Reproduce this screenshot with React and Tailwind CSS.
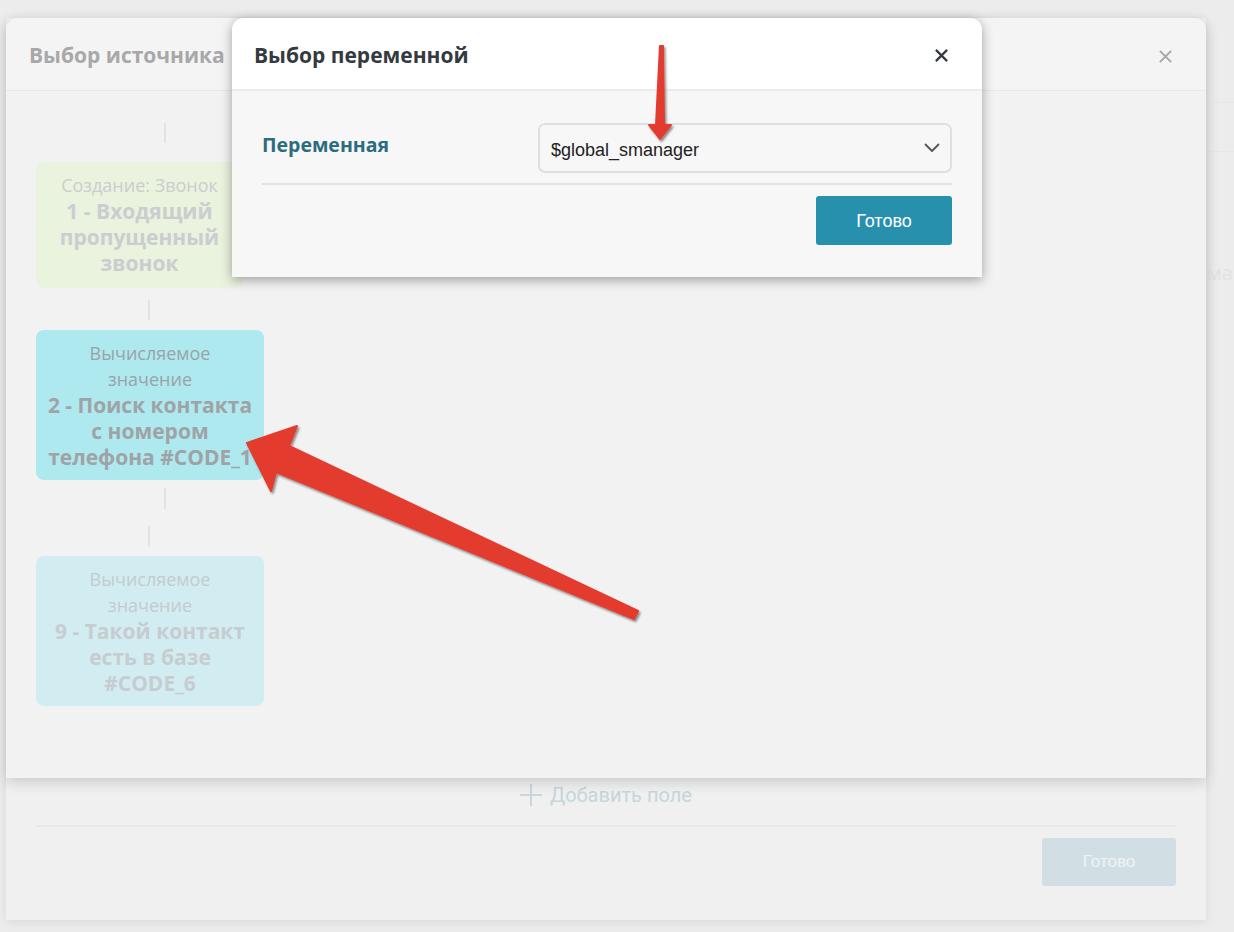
import React from "react";

function XIcon({ color, size = 15, sw = 2.4 }) {
  return (
    <svg width={size} height={size} viewBox="0 0 16 16" fill="none">
      <path d="M2 2 L14 14 M14 2 L2 14" stroke={color} strokeWidth={sw} strokeLinecap="butt" />
    </svg>
  );
}

function Chevron() {
  return (
    <svg width="16" height="10" viewBox="0 0 16 10" fill="none">
      <path d="M1.5 1.5 L8 8 L14.5 1.5" stroke="#555" strokeWidth="1.8" strokeLinecap="round" strokeLinejoin="round" />
    </svg>
  );
}

function Connector({ ml, mt, h }) {
  return <div className={`w-[2px] bg-[#e3e3e3] ${ml} ${mt} ${h}`} />;
}

export default function App() {
  const sans = { fontFamily: '"Open Sans", "Noto Sans", sans-serif' };
  const arial = { fontFamily: '"Liberation Sans", Arial, sans-serif' };
  return (
    <div className="relative w-[1234px] h-[932px] overflow-hidden bg-[#ececec] flex" style={sans}>
      {/* base page panel */}
      <div className="mt-[18px] ml-[6px] w-[1200px] h-[902px] shrink-0 bg-[#f0f0f0] shadow-[0_2px_10px_rgba(0,0,0,0.08)] flex flex-col justify-end px-[30px] pb-[34px]">
        <div className="flex items-center justify-center gap-[8px] h-[30px] mb-[15px]">
          <svg width="22" height="22" viewBox="0 0 22 22" fill="none">
            <path d="M11 0 V22 M0 11 H22" stroke="#c8d8dd" strokeWidth="2" />
          </svg>
          <span className="text-[20px] text-[#c6d6db]" style={{ fontFamily: 'Roboto, sans-serif' }}>Добавить поле</span>
        </div>
        <div className="h-[2px] bg-[#e9e9e9]" />
        <div className="flex justify-end mt-[11px]">
          <div className="w-[134px] h-[48px] rounded-[3px] bg-[#d1dfe4] flex items-center justify-center text-[17px] text-[#eef4f6]" style={arial}>
            Готово
          </div>
        </div>
      </div>
      {/* right strip of background page */}
      <div className="flex-1 flex flex-col pt-[102px] overflow-hidden">
        <div className="h-px bg-[#e6e6e6]" />
        <div className="h-px bg-[#e6e6e6] mt-[48px]" />
        <div className="mt-[106px] pl-[1px] text-[20px] text-[#e2e2e2] whitespace-nowrap" style={sans}>ма</div>
      </div>

      {/* Source modal */}
      <div className="absolute left-[6px] top-[18px] w-[1200px] h-[760px] rounded-t-[12px] bg-[#f2f2f2] shadow-[0_4px_14px_rgba(0,0,0,0.16)] flex flex-col">
        <div className="h-[73px] shrink-0 flex items-center justify-between pl-[23px] pr-[33px] pt-[4px] bg-[#f4f4f4] rounded-t-[12px] border-b border-[#e7e7e7]">
          <div className="text-[21px] font-bold text-[#a8a8a8]">Выбор источника</div>
          <XIcon color="#a3a6aa" size={15} sw={2} />
        </div>
        <div className="flex flex-col items-start pl-[30px]">
          <Connector ml="ml-[128px]" mt="mt-[32px]" h="h-[20px]" />
          <div className="mt-[19px] w-[207px] h-[126px] rounded-[8px] bg-[#e9f3dd] py-[10px] text-center leading-[26px] whitespace-nowrap">
            <div className="text-[18px] text-[#cbcdd1]">Создание: Звонок</div>
            <div className="text-[21px] font-bold text-[#cbcdd1] whitespace-pre-line">{"1 - Входящий\nпропущенный\nзвонок"}</div>
          </div>
          <Connector ml="ml-[112px]" mt="mt-[12px]" h="h-[20px]" />
          <div className="mt-[10px] w-[228px] h-[150px] rounded-[8px] bg-[#aee9f0] py-[10px] text-center leading-[26px] whitespace-nowrap">
            <div className="text-[18px] text-[#9aa3a6] whitespace-pre-line">{"Вычисляемое\nзначение"}</div>
            <div className="text-[21px] font-bold text-[#a0a3a5] whitespace-pre-line">{"2 - Поиск контакта\nс номером\nтелефона #CODE_1"}</div>
          </div>
          <Connector ml="ml-[128px]" mt="mt-[8px]" h="h-[21px]" />
          <Connector ml="ml-[112px]" mt="mt-[17px]" h="h-[21px]" />
          <div className="mt-[9px] w-[228px] h-[150px] rounded-[8px] bg-[#d2edf1] py-[10px] text-center leading-[26px] whitespace-nowrap">
            <div className="text-[18px] text-[#c3cbce] whitespace-pre-line">{"Вычисляемое\nзначение"}</div>
            <div className="text-[21px] font-bold text-[#c6cccf] whitespace-pre-line">{"9 - Такой контакт\nесть в базе\n#CODE_6"}</div>
          </div>
        </div>
      </div>

      {/* Variable modal */}
      <div className="absolute left-[232px] top-[18px] w-[750px] rounded-t-[12px] bg-[#f7f7f7] shadow-[0_3px_12px_rgba(0,0,0,0.35)]">
        <div className="h-[73px] flex items-center justify-between pl-[22px] pr-[33px] pt-[4px] bg-white rounded-t-[12px] border-b-2 border-[#ececec]">
          <div className="text-[21px] font-bold text-[#343a40]">Выбор переменной</div>
          <XIcon color="#343a40" size={15} sw={2.4} />
        </div>
        <div className="px-[30px] pt-[32px] pb-[32px]">
          <div className="flex items-center justify-between">
            <div className="text-[19.5px] font-bold text-[#2b6d7e] pb-[6px]">Переменная</div>
            <div className="w-[414px] h-[50px] rounded-[7px] border-2 border-[#dde1e4] bg-[#f7f7f7] flex items-center justify-between pl-[11px] pr-[10px]">
              <span className="text-[18px] text-[#222] pt-[4px]" style={arial}>$global_smanager</span>
              <Chevron />
            </div>
          </div>
          <div className="mt-[10px] h-[2px] bg-[#e3e3e3]" />
          <div className="flex justify-end mt-[11px]">
            <div className="w-[136px] h-[49px] rounded-[3px] bg-[#2790ad] flex items-center justify-center text-[18px] text-white pt-[2px]" style={arial}>
              Готово
            </div>
          </div>
        </div>
      </div>

      {/* Annotation arrows */}
      <svg className="absolute inset-0 pointer-events-none" width="1234" height="932" viewBox="0 0 1234 932">
        <defs>
          <filter id="sh" x="-10%" y="-10%" width="130%" height="130%">
            <feDropShadow dx="1.5" dy="2" stdDeviation="1" floodColor="#000" floodOpacity="0.45" />
          </filter>
        </defs>
        <g filter="url(#sh)" fill="#e33b2f" stroke="#e33b2f" strokeLinejoin="round" strokeWidth="2">
          <polygon points="247,443 297,426 289,446 638,611 634,619 276,472 271,491" />
          <polygon points="660,46 663,46 664,125 671,125 660,139 649,125 656,125" />
        </g>
      </svg>
    </div>
  );
}
